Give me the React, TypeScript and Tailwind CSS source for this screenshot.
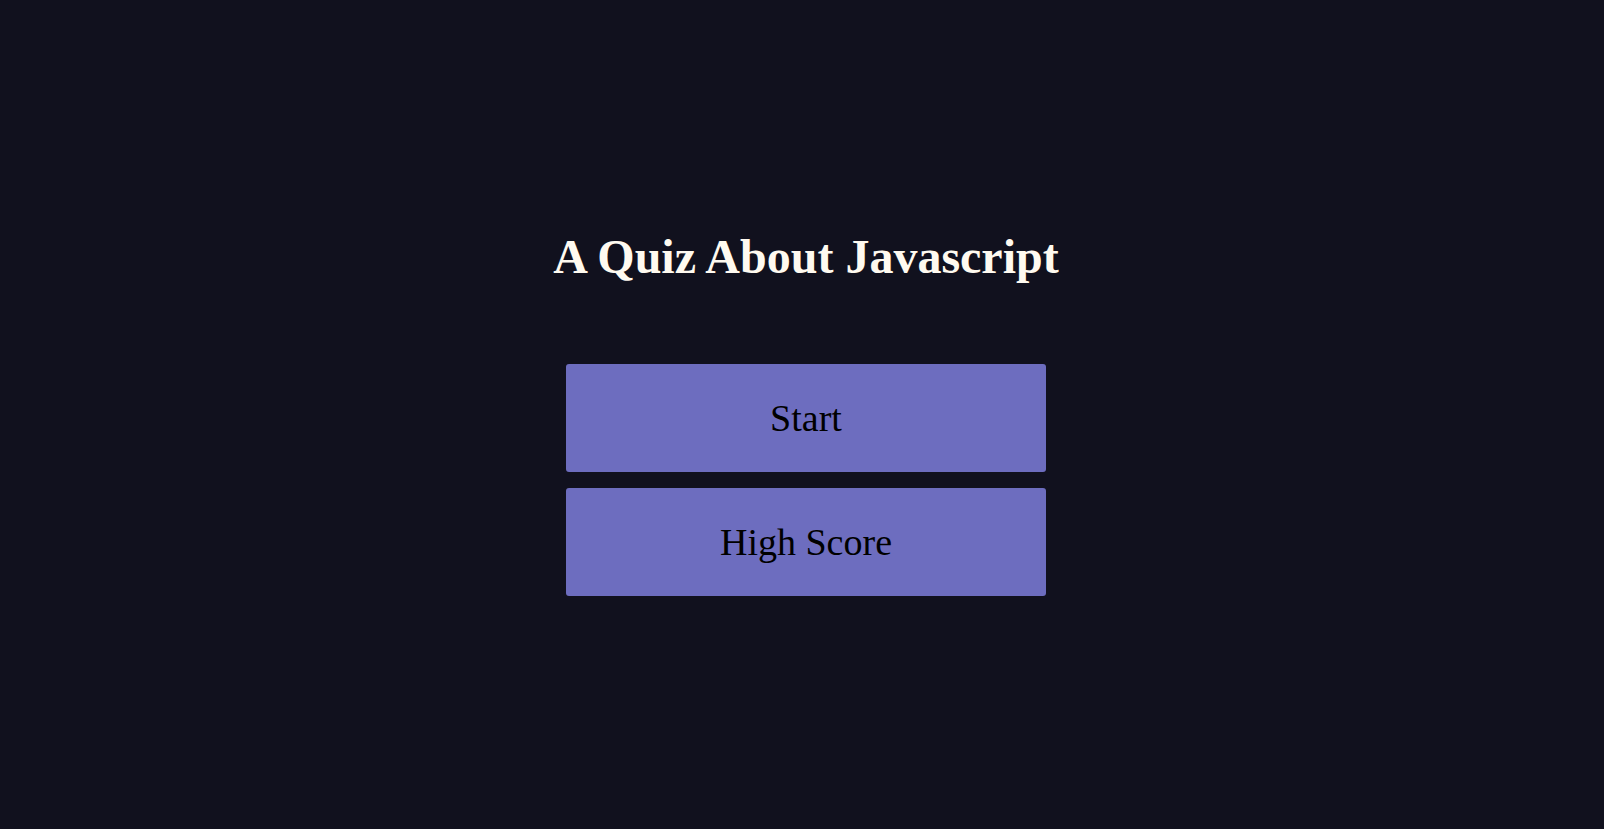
export default function App() {
  return (
    <main className="min-h-screen bg-[#11111e] font-['Liberation_Serif',serif]">
      <div className="flex flex-col items-center pt-[229px] pl-[8px]">
        <h1 className="text-[48px] font-bold leading-[55px] text-[#fffaf0]">
          A Quiz About Javascript
        </h1>
        <div className="mt-[80px] flex flex-col gap-4">
          <button className="h-[108px] w-[480px] rounded-[3px] bg-[#6d6dbf] text-[38px] text-black">
            Start
          </button>
          <button className="h-[108px] w-[480px] rounded-[3px] bg-[#6d6dbf] text-[38px] text-black">
            High Score
          </button>
        </div>
      </div>
    </main>
  );
}
